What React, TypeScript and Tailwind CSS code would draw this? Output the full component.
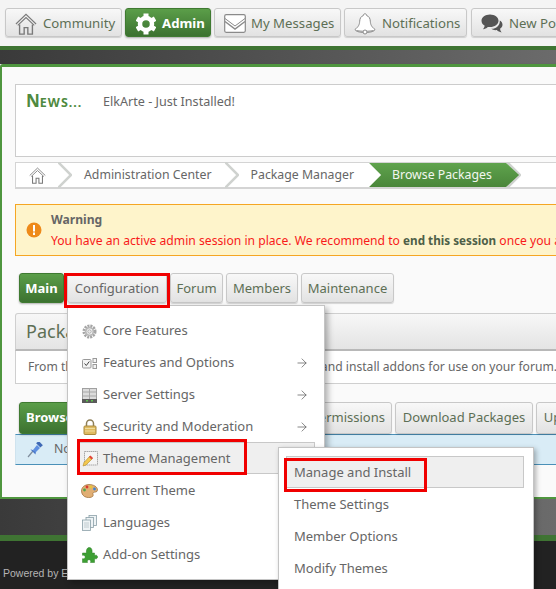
import { ArrowRight } from 'lucide-react';

const navBtn =
  'flex items-center h-[30px] rounded-[3px] border border-[#c8c8c8] bg-gradient-to-b from-[#f8f8f8] to-[#e2e2e2] shadow-[0_1px_1px_rgba(0,0,0,0.15)] text-[#5d6f55] whitespace-nowrap shrink-0';
const greenBtn =
  'flex items-center h-[30px] rounded-[3px] border border-[#3f7a31] bg-gradient-to-b from-[#5b9e49] to-[#3c7230] shadow-[0_1px_2px_rgba(0,0,0,0.3)] text-white font-bold whitespace-nowrap shrink-0';

function HomeIcon({ size = 22 }: { size?: number }) {
  return (
    <svg width={size} height={size} viewBox="0 0 24 24" fill="none" stroke="#7a7a7a" strokeWidth="1.2">
      <path d="M1 12 12 1.5 23 12" />
      <path d="M3 13.5 12 5l9 8.5" />
      <path d="M5 12.5V23h5v-7h4v7h5V12.5" strokeWidth="1.5" />
    </svg>
  );
}

function Cog() {
  return (
    <svg width="20" height="22" viewBox="0 0 20 22">
      <circle cx="10" cy="11" r="6" fill="none" stroke="#fff" strokeWidth="4.5" />
      <g fill="#fff">
        <rect x="7.5" y="0.5" width="5" height="4" />
        <rect x="7.5" y="17.5" width="5" height="4" />
        <rect x="7.5" y="0.5" width="5" height="4" transform="rotate(60 10 11)" />
        <rect x="7.5" y="0.5" width="5" height="4" transform="rotate(120 10 11)" />
        <rect x="7.5" y="0.5" width="5" height="4" transform="rotate(240 10 11)" />
        <rect x="7.5" y="0.5" width="5" height="4" transform="rotate(300 10 11)" />
      </g>
    </svg>
  );
}

function Envelope() {
  return (
    <svg width="22" height="19" viewBox="0 0 22 19" fill="#fff" stroke="#8a8a8a">
      <rect x="0.7" y="0.7" width="20.6" height="17.6" rx="1.5" strokeWidth="1.2" />
      <path d="M1 4.5 11 12l10-7.5" fill="none" />
      <path d="M1 7.5 11 15l10-7.5" fill="none" strokeWidth="1.4" />
    </svg>
  );
}

function Bell() {
  return (
    <svg width="22" height="22" viewBox="0 0 22 22" fill="#fff" stroke="#8a8a8a" strokeWidth="1">
      <path d="M11 .8c1.2 0 1.7.9 1.7 1.8 2.6.8 3.4 3 3.6 5.6.2 3.200 1 5.400 4.700 8.300 0 1.500-4 3-10 3S1 18 1 16.500c3.700-2.900 4.500-5.100 4.700-8.300.2-2.600 1-4.800 3.600-5.600C9.300 1.700 9.800.8 11 .8Z" />
      <path d="M2.500 17.500c3 1 14 1 17 0" fill="none" />
      <circle cx="11" cy="19" r="2" />
    </svg>
  );
}

function Comments() {
  return (
    <svg width="22" height="20" viewBox="0 0 22 20" fill="#555">
      <path d="M9 .5c4.700 0 8.500 2.800 8.500 6.300s-3.800 6.300-8.500 6.300c-.8 0-1.500-.1-2.200-.2C5.500 14.200 3.800 15 2 15.300c.9-1 1.500-2.200 1.700-3.500C1.800 10.700.5 8.900.5 6.800.5 3.300 4.300.5 9 .5Z" />
      <path d="M18.800 6.500c1.700 1 2.700 2.500 2.700 4.200 0 1.700-1 3.100-2.500 4.100.2 1.300.7 2.500 1.600 3.600-1.900-.2-3.600-1-4.800-2.300-2.300.3-4.200-.2-5.500-1.300 4.900.1 8.800-3.300 8.500-8.300Z" />
    </svg>
  );
}

function GearSmall() {
  return (
    <svg width="15" height="15" viewBox="0 0 15 15">
      <circle cx="7.500" cy="7.500" r="5.500" fill="none" stroke="#a5a5a5" strokeWidth="3" strokeDasharray="2 0.900" />
      <circle cx="7.500" cy="7.500" r="3.800" fill="none" stroke="#b8b8b8" strokeWidth="1.800" />
      <circle cx="7.500" cy="7.500" r="1.800" fill="#e8e8e8" stroke="#8a8a8a" strokeWidth=".6" />
    </svg>
  );
}

function FeaturesIcon() {
  return (
    <svg width="15" height="11" viewBox="0 0 15 11" fill="#f4f4f4" stroke="#999">
      <rect x="0.500" y="1.500" width="8.500" height="8.500" rx="1" />
      <path d="m2.500 5.500 1.800 2 3-4" fill="none" stroke="#444" />
      <rect x="11" y="0.500" width="3.500" height="4" />
      <rect x="11" y="6.500" width="3.500" height="4" />
    </svg>
  );
}

function ServerIcon() {
  return (
    <svg width="15" height="15" viewBox="0 0 15 15">
      <rect x="0.500" y="0.500" width="14" height="11" fill="#dcdcdc" stroke="#a0a0a0" />
      <path d="M7.500 .5v11M1 4h13M1 8h13" stroke="#a8a8a8" />
      <rect x="0" y="11" width="15" height="4" fill="#5a5a5a" />
      <rect x="4" y="12" width="2" height="1.500" fill="#5fc04e" />
      <rect x="9" y="12" width="2" height="1.500" fill="#5fc04e" />
    </svg>
  );
}

function LockIcon() {
  return (
    <svg width="14" height="16" viewBox="0 0 14 16">
      <path d="M3.500 8V4.500a3.500 3.500 0 0 1 7 0V8" fill="none" stroke="#8e7f58" strokeWidth="1.500" />
      <rect x="1" y="7" width="12" height="8.500" rx="1" fill="#dfbb62" stroke="#a98a3e" />
      <path d="M2 9.500h10M2 12h10" stroke="#f0dc9c" />
    </svg>
  );
}

function ThemeIcon() {
  return (
    <svg width="16" height="16" viewBox="0 0 16 16">
      <rect x="2.500" y="0.500" width="13" height="13.500" fill="#f4f4f4" stroke="#a8a8a8" strokeDasharray="1.500 .5" />
      <path d="m1 15 1-3.500L8 5l2.500 2.500L4 14Z" fill="#f3c84f" stroke="#b08a2a" strokeWidth=".6" />
      <path d="m7 6 1.500-1.500L11 7 9.500 8.500Z" fill="#e2453a" />
    </svg>
  );
}

function PaletteIcon() {
  return (
    <svg width="17" height="14" viewBox="0 0 17 14">
      <path d="M8 .5c4.500 0 8.500 2.300 8.500 5.500 0 2.500-3 1.800-4.200 2.600-1.200.8.700 2.400-.5 3.700-1.400 1.400-4 1.500-6.300 1C2.500 12.700.5 10 .5 7 .5 3 4 .5 8 .5Z" fill="#e0ae74" stroke="#9b6b36" strokeWidth=".7" />
      <circle cx="6" cy="3" r="1.400" fill="#d8382e" />
      <circle cx="10" cy="3" r="1.400" fill="#e8c53a" />
      <circle cx="13.500" cy="5" r="1.400" fill="#3f83d0" />
      <circle cx="3.500" cy="6" r="1.400" fill="#4fa64a" />
    </svg>
  );
}

function DocsIcon() {
  return (
    <svg width="15" height="16" viewBox="0 0 15 16" fill="#eef3f5" stroke="#8aa0a8" strokeWidth=".8">
      <rect x="7" y="0.500" width="7.500" height="10" />
      <rect x="4" y="2.500" width="7.500" height="10" />
      <rect x="0.500" y="5" width="8" height="10.500" />
      <path d="M2 8h5M2 10h5M2 12h5" stroke="#b5c2c7" />
    </svg>
  );
}

function PuzzleIcon() {
  return (
    <svg width="16" height="16" viewBox="0 0 16 16">
      <path
        d="M0.500 6H4.500C4 3 5 .5 7.300.5S10.500 3 10 6h2.500v2.500c1.500-.8 3-.2 3 1.500s-1.500 2.300-3 1.500V15.500H8.500c.6-1.500 0-2.800-1.500-2.800S5 14 5.500 15.500H.5v-3.800C2 12.200 3.200 11.500 3.200 10S2 7.800.5 8.300Z"
        fill="#3d9f33"
        stroke="#2d7f26"
        strokeWidth=".5"
      />
    </svg>
  );
}

function PinIcon() {
  return (
    <svg width="16" height="16" viewBox="0 0 16 16">
      <path d="M1 15 6 9" stroke="#7f8d9c" strokeWidth="1.200" />
      <path d="M4 7.500 9 9l-.5 3.500L3.500 7.500Z" fill="#4a78c8" />
      <path d="M6 8 10 3l3 3-4.500 4.500Z" fill="#5f8fe0" />
      <rect x="9.500" y="0.500" width="6" height="3.500" transform="rotate(45 12.500 2.250)" fill="#3f69b5" />
    </svg>
  );
}

function Crumb({ className = '' }: { className?: string }) {
  return (
    <svg width="14" height="26" viewBox="0 0 14 26" fill="none" stroke="#cfd2cf" strokeWidth="2.500" className={`shrink-0 ${className}`}>
      <path d="M0 0 13 13 0 26" />
    </svg>
  );
}

const menuItems = [
  { label: 'Core Features', icon: <GearSmall /> },
  { label: 'Features and Options', icon: <FeaturesIcon />, arrow: true },
  { label: 'Server Settings', icon: <ServerIcon />, arrow: true },
  { label: 'Security and Moderation', icon: <LockIcon />, arrow: true },
  { label: 'Theme Management', icon: <ThemeIcon />, active: true },
  { label: 'Current Theme', icon: <PaletteIcon /> },
  { label: 'Languages', icon: <DocsIcon /> },
  { label: 'Add-on Settings', icon: <PuzzleIcon /> },
];

const subItems = ['Manage and Install', 'Theme Settings', 'Member Options', 'Modify Themes'];

export default function App() {
  return (
    <div className="relative h-[589px] w-[556px] overflow-hidden bg-[#f4f4f4] text-[14px] font-['Noto_Sans',sans-serif]">
      {/* Top menu */}
      <nav className="flex h-[46px] items-start gap-[3px] pl-[5px] pt-[8px] text-[13.2px]">
        <a className={`${navBtn} !h-[29px] w-[117px] gap-[6px] pl-[9px] pt-[2px]`}>
          <HomeIcon />
          Community
        </a>
        <a className={`${greenBtn} !h-[29px] w-[86px] gap-[6px] pl-[10px] pt-[2px]`}>
          <Cog />
          Admin
        </a>
        <a className={`${navBtn} !h-[29px] w-[127px] gap-[5px] pl-[9px] pt-[2px]`}>
          <Envelope />
          My Messages
        </a>
        <a className={`${navBtn} !h-[29px] w-[123px] gap-[6px] pl-[9px] pt-[2px]`}>
          <Bell />
          Notifications
        </a>
        <a className={`${navBtn} !h-[29px] ml-[1px] w-[120px] gap-[6px] pl-[9px] pt-[2px]`}>
          <Comments />
          New Post
        </a>
      </nav>

      <div className="h-[18px] border-t-4 border-[#3f7433] bg-gradient-to-r from-[#3a3a3a] to-[#6b6b6b]" />

      {/* Main content */}
      <main className="h-[435px] w-[800px] rounded-tl-[3px] border-t-[3px] border-b-[2px] border-l-2 border-[#4f963f] bg-[#fafafa] pl-[13px] pt-[17px] shadow-[0_1px_2px_rgba(0,0,0,0.4)]">
        <div className="flex h-[73px] items-start border border-[#cccccc] bg-white pl-[10px] pt-[3px] text-[12.6px] text-[#666]">
          <span className="w-[77px] font-bold text-[#4f8a3f]">
            <span className="text-[17px]">N</span>
            <span className="text-[12.5px] tracking-[1px]">EWS...</span>
          </span>
          <span className="pt-[5px]">ElkArte - Just Installed!</span>
        </div>

        <div className="mt-[5px] flex h-[27px] items-center border border-b-2 border-[#d4d4d4] bg-white text-[12.3px] text-[#666]">
          <span className="ml-[13px] mr-[12px]">
            <HomeIcon size={17} />
          </span>
          <Crumb />
          <span className="ml-[12px] mr-[13px]">Administration Center</span>
          <Crumb />
          <span className="ml-[12px] mr-[15px]">Package Manager</span>
          <span className="flex h-full w-[150px] shrink-0 items-center bg-gradient-to-b from-[#5fa34d] to-[#4a863a] pl-[23px] text-[#f2f7f0] [clip-path:polygon(0_0,137px_0,150px_50%,137px_100%,0_100%,12px_50%)]">
            Browse Packages
          </span>
          <Crumb className="-ml-[12px]" />
        </div>

        <div className="mt-[15px] flex h-[52px] items-center border-y border-l border-[#f5a623] bg-[#fef4cb] pl-[10px] text-[12.15px]">
          <svg width="16" height="16" viewBox="0 0 16 16" className="shrink-0">
            <circle cx="8" cy="8" r="7.500" fill="#ee8a1a" />
            <rect x="7" y="3" width="2" height="6.500" fill="#fff" />
            <rect x="7" y="10.500" width="2" height="2.500" fill="#fff" />
          </svg>
          <div className="ml-[9px] whitespace-nowrap pt-[1px]">
            <div className="font-bold leading-[20px] text-[#666]">Warning</div>
            <div className="leading-[21px] text-[#f81a1a]">
              You have an active admin session in place. We recommend to{' '}
              <strong className="text-[11.7px] text-[#4e5f48]">end this session</strong> once you are done with your administrative tasks.
            </div>
          </div>
        </div>

        <div className="ml-[4px] mt-[17px] flex gap-[3px] text-[13px]">
          <a className={`${greenBtn} w-[45px] justify-center pt-[1px]`}>Main</a>
          <a className={`${navBtn} w-[100px] justify-center pt-[1px] text-[#666]`}>Configuration</a>
          <a className={`${navBtn} w-[53px] justify-center pt-[1px]`}>Forum</a>
          <a className={`${navBtn} w-[72px] justify-center pt-[1px]`}>Members</a>
          <a className={`${navBtn} w-[93px] justify-center pt-[1px]`}>Maintenance</a>
        </div>

        <section className="mt-[10px]">
          <h2 className="flex h-[38px] items-center rounded-t-[3px] border border-b-2 border-[#cfcfcf] border-b-[#b8b8b8] bg-gradient-to-b from-[#f7f7f7] to-[#e4e4e4] pl-[10px] text-[18px] font-normal text-[#5d6f55]">
            Package Manager
          </h2>
          <p className="flex h-[33px] items-center whitespace-nowrap border-x border-b border-[#cfcfcf] bg-white pl-[12px] text-[12.13px] text-[#666]">
            From this screen you are able to browse, download and install addons for use on your forum.
          </p>
        </section>

        <div className="ml-[4px] mt-[18px] flex gap-[3px] text-[13px]">
          <a className={`${greenBtn} !h-[32px] w-[120px] pl-[6px]`}>Browse Packages</a>
          <a className={`${navBtn} !h-[32px] w-[125px] justify-center`}>Installed Packages</a>
          <a className={`${navBtn} !h-[32px] w-[122px] justify-end pr-[6px]`}>File Permissions</a>
          <a className={`${navBtn} !h-[32px] w-[138px] justify-center`}>Download Packages</a>
          <a className={`${navBtn} !h-[32px] w-[120px] justify-center`}>Upload Packages</a>
        </div>

        <div className="flex h-[31px] items-center gap-[11px] border-x border-y border-[#cfe3ee] border-y-[#4a90b8] bg-[#d9ecf6] pl-[11px] text-[12.3px] text-[#666]">
          <PinIcon />
          No packages are currently installed
        </div>
      </main>

      <div className="h-[36px] bg-gradient-to-r from-[#3a3a3a] to-[#6b6b6b]" />
      <footer className="h-[54px] border-t-[6px] border-[#3f7433] bg-[#222222] pl-[3px] pt-[25px] text-[10.5px] font-['Liberation_Sans',sans-serif] text-[#b5b5b5]">
        Powered by ElkArte
      </footer>

      {/* Configuration dropdown */}
      <ul className="absolute left-[67px] top-[305px] h-[275px] w-[258px] border border-[#c4c4c4] bg-white pt-[8px] text-[13px] text-[#666] shadow-[3px_3px_6px_rgba(0,0,0,0.3)]">
        {menuItems.map((item) => (
          <li
            key={item.label}
            className={`ml-[10px] flex h-[32px] w-[237px] items-center border pl-[1px] pt-[2px] ${
              item.active ? 'border-[#c8c8c8] bg-[#efefef]' : 'border-transparent'
            }`}
          >
            <span className="flex w-[19px] shrink-0 justify-center">{item.icon}</span>
            <span className="ml-[4px] whitespace-nowrap">{item.label}</span>
            {item.arrow && <ArrowRight size={14} strokeWidth={1.2} className="ml-auto mr-[5px] text-[#555]" />}
          </li>
        ))}
      </ul>

      {/* Theme Management submenu */}
      <ul className="absolute left-[278px] top-[447px] h-[160px] w-[256px] border border-[#c4c4c4] bg-white pt-[8px] text-[13px] text-[#666] shadow-[2px_2px_5px_rgba(0,0,0,0.3)]">
        {subItems.map((label, i) => (
          <li
            key={label}
            className={`ml-[7px] flex h-[32px] w-[238px] items-center border pl-[7px] pt-[2px] ${
              i === 0 ? 'border-[#c8c8c8] bg-[#efefef]' : 'border-transparent'
            }`}
          >
            {label}
          </li>
        ))}
      </ul>

      {/* Red annotation boxes */}
      <div className="absolute left-[64px] top-[273px] h-[35px] w-[106px] border-[3px] border-[#f00000]" />
      <div className="absolute left-[77px] top-[439px] h-[36px] w-[170px] border-[3px] border-[#f00000]" />
      <div className="absolute left-[284px] top-[458px] h-[34px] w-[143px] border-[3px] border-[#f00000]" />
    </div>
  );
}
